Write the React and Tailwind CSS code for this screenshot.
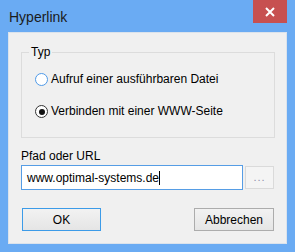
import React from 'react';

const font = { fontFamily: '"Liberation Sans", Arial, sans-serif' };

function Radio({ checked, focused, label }) {
  return (
    <div className="flex items-center h-[13px]">
      <span
        className={`w-[13px] h-[13px] rounded-full border bg-white flex items-center justify-center ${
          focused ? 'border-[#4f9ae8]' : 'border-[#333333]'
        }`}
      >
        {checked && <span className="w-[6px] h-[6px] rounded-full bg-[#111111]" />}
      </span>
      <span className="ml-[3px] text-[12px] leading-[15px] text-black">{label}</span>
    </div>
  );
}

export default function App() {
  return (
    <div className="w-[295px] h-[252px] bg-[#6aabf3] flex flex-col" style={font}>
      {/* Title bar */}
      <div className="h-[32px] flex items-start justify-between pr-[8px]">
        <span className="pl-[9px] pt-[9px] text-[14px] leading-[16px] text-[#1b1b1b]">Hyperlink</span>
        <button className="w-[34px] h-[23px] bg-[#c75050] flex items-center justify-center">
          <svg width="10" height="10" viewBox="0 0 10 10">
            <path d="M1 1L9 9M9 1L1 9" stroke="#ffffff" strokeWidth="2" />
          </svg>
        </button>
      </div>

      {/* Client area */}
      <div className="flex-1 mx-[8px] mb-[8px] bg-[#f0f0f0] border border-[#dbe3ec] flex flex-col pl-[12px] pr-[11px]">
        <fieldset className="mt-[12px] h-[93px] border border-[#dcdcdc]">
          <legend className="ml-[7px] px-[2px] text-[12px] leading-[15px] text-black">Typ</legend>
          <div className="flex flex-col gap-[19px] pt-[13px] pl-[13px]">
            <Radio focused label="Aufruf einer ausführbaren Datei" />
            <Radio checked label="Verbinden mit einer WWW-Seite" />
          </div>
        </fieldset>

        <span className="mt-[11px] text-[12px] leading-[15px] text-black">Pfad oder URL</span>
        <div className="mt-[1px] flex items-center gap-[2px]">
          <div className="w-[222px] h-[25px] bg-white border border-[#569de5] flex items-center pl-[5px] text-[12px] text-black">
            www.optimal-systems.de
            <span className="w-[1px] h-[14px] bg-black" />
          </div>
          <button className="w-[29px] h-[23px] border border-[#dadada] bg-[#f4f4f4] text-[11px] leading-[11px] text-[#8c8ca8] tracking-[1px]">
            ...
          </button>
        </div>

        <div className="mt-[18px] flex justify-between pl-[1px] pr-[1px]">
          <button className="w-[79px] h-[23px] border border-[#3c9be8] bg-gradient-to-b from-[#f2f2f2] to-[#e5e5e5] text-[12px] text-black">
            OK
          </button>
          <button className="w-[80px] h-[23px] border border-[#acacac] bg-gradient-to-b from-[#f2f2f2] to-[#e5e5e5] text-[12px] text-black">
            Abbrechen
          </button>
        </div>
      </div>
    </div>
  );
}
